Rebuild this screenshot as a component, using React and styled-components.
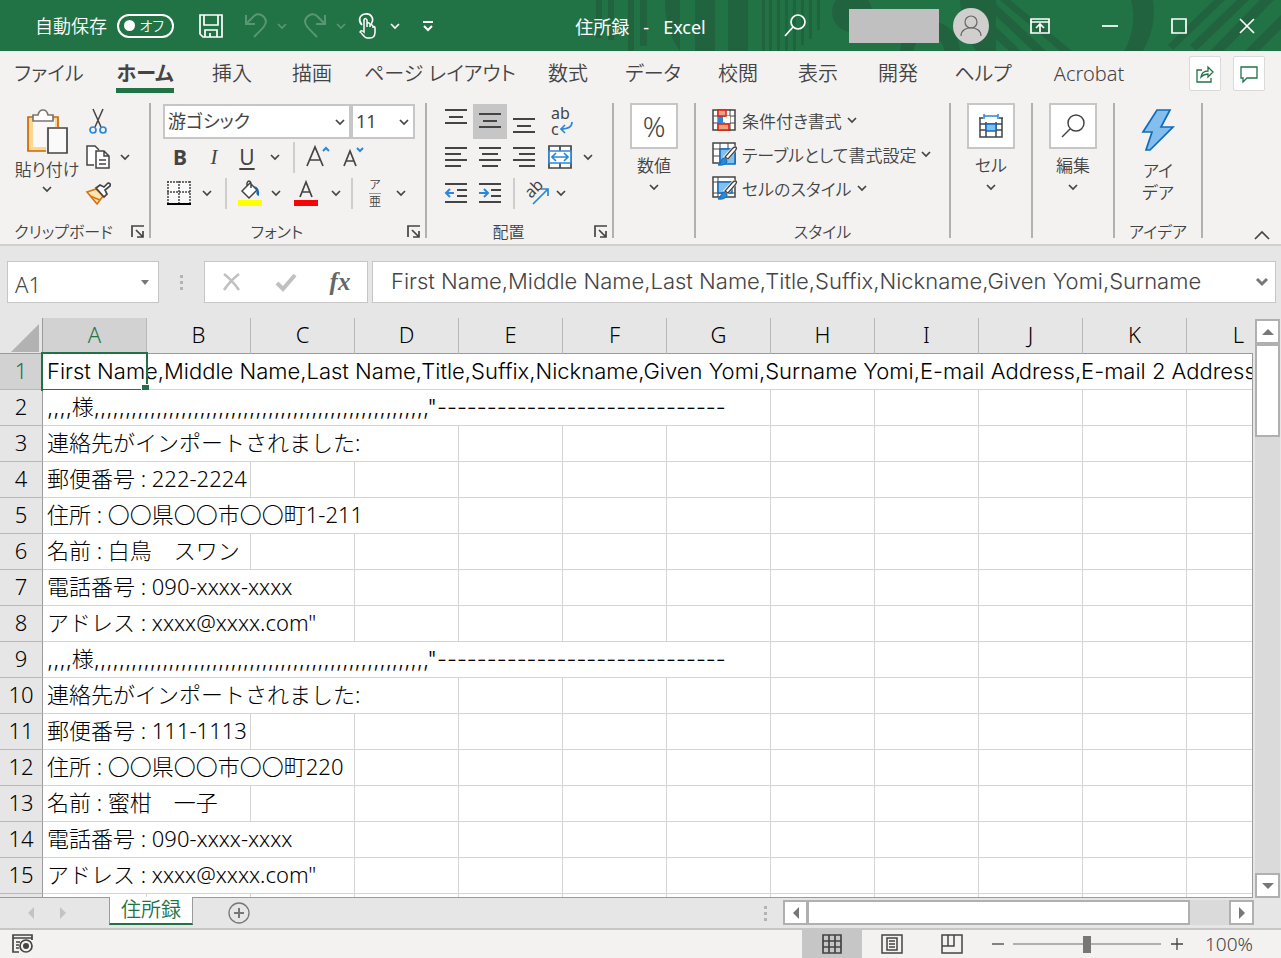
import { useState } from "react";
import styled, { createGlobalStyle, css } from "styled-components";

const HEADER_LINE = "First Name,Middle Name,Last Name,Title,Suffix,Nickname,Given Yomi,Surname";
const COMMAS = ",".repeat(54);
const DASHES = "-".repeat(29);

const columns = ["A", "B", "C", "D", "E", "F", "G", "H", "I", "J", "K", "L"];

// span = number of columns the text runs over
const rows = [
    { text: `${HEADER_LINE} Yomi,E-mail Address,E-mail 2 Address`, span: 12, latin: true },
    { text: `,,,,様${COMMAS}"${DASHES}`, span: 7, latin: true },
    { text: "連絡先がインポートされました:", span: 4 },
    { text: "郵便番号 : 222-2224", span: 2 },
    { text: "住所 : 〇〇県〇〇市〇〇町1-211", span: 4 },
    { text: "名前 : 白鳥　スワン", span: 2 },
    { text: "電話番号 : 090-xxxx-xxxx", span: 3 },
    { text: 'アドレス : xxxx@xxxx.com"', span: 3 },
    { text: `,,,,様${COMMAS}"${DASHES}`, span: 7, latin: true },
    { text: "連絡先がインポートされました:", span: 4 },
    { text: "郵便番号 : 111-1113", span: 2 },
    { text: "住所 : 〇〇県〇〇市〇〇町220", span: 3 },
    { text: "名前 : 蜜柑　一子", span: 2 },
    { text: "電話番号 : 090-xxxx-xxxx", span: 3 },
    { text: 'アドレス : xxxx@xxxx.com"', span: 3 },
    { text: "", span: 1 },
];

const tabs = [
    { name: "ファイル", width: 98 },
    { name: "ホーム", width: 94 },
    { name: "挿入", width: 80 },
    { name: "描画", width: 80 },
    { name: "ページ レイアウト", width: 176 },
    { name: "数式", width: 80 },
    { name: "データ", width: 90 },
    { name: "校閲", width: 80 },
    { name: "表示", width: 80 },
    { name: "開発", width: 80 },
    { name: "ヘルプ", width: 90 },
    { name: "Acrobat", width: 122 },
];

const App = () => {
    return(
        <>
            <GlobalStyle />
            <Window>
                <TitleBar />
                <RibbonTabs />
                <Ribbon />
                <FormulaBar />
                <Sheet />
                <SheetTabs />
                <StatusBar />
            </Window>
        </>
    );
};

const Chevron = () => (
    <Icon width="10" height="8" viewBox="0 0 10 8">
        <path d="M1 2l4 4 4-4" strokeWidth="1.7" />
    </Icon>
);

// Title bar
const TitleBar = () => {
    const [autoSave, setAutoSave] = useState(false);

    return(
        <StyledTitleBar>
            <TitlePattern />
            <QuickAccess>
                <AutoSave>
                    自動保存
                    <input type="checkbox" checked={autoSave} onChange={() => setAutoSave(!autoSave)} />
                    <Toggle>
                        <i />
                        <span>オフ</span>
                    </Toggle>
                </AutoSave>
                <BarButton $width={62} aria-label="保存">
                    <Icon width="26" height="26" viewBox="0 0 26 26">
                        <path d="M2 2h22v22H5l-3-3zM6 2v10h14V2M7 24v-7h12v7M12 20v4" strokeWidth="1.7" />
                    </Icon>
                </BarButton>
                <BarButton $width={28} $dim aria-label="元に戻す">
                    <Icon width="24" height="26" viewBox="0 0 24 26">
                        <path d="M2 2v9h9M2 11l8-8c5-4 11 0 12 5 0 4-2 6-12 16" strokeWidth="2" />
                    </Icon>
                </BarButton>
                <BarButton $width={24} $dim aria-label="元に戻すの一覧"><Chevron /></BarButton>
                <BarButton $width={42} $dim aria-label="やり直し">
                    <Icon width="24" height="26" viewBox="0 0 24 26">
                        <path d="M22 2v9h-9M22 11l-8-8C9-1 3 3 2 8c0 4 2 6 12 16" strokeWidth="2" />
                    </Icon>
                </BarButton>
                <BarButton $width={10} $dim aria-label="やり直しの一覧"><Chevron /></BarButton>
                <BarButton $width={44} aria-label="タッチ/マウス モード">
                    <Icon width="20" height="26" viewBox="0 0 20 26">
                        <path d="M4 12C0 8 1 2 7 1s10 5 6 10" strokeWidth="1.7" />
                        <path d="M6 17V7q1-3 3 0v7V10q2-1 3 1v3-2q2-1 3 1v2-1q2-1 2 1v4c0 4-2 6-5 6H9c-3 0-4-4-7-6 1-2 3-1 4 0z" strokeWidth="1.5" />
                    </Icon>
                </BarButton>
                <BarButton $width={10} aria-label="モードの一覧"><Chevron /></BarButton>
                <BarButton $width={56} aria-label="ツール バーのカスタマイズ">
                    <Icon width="12" height="12" viewBox="0 0 12 12">
                        <path d="M1 2h10M2 6l4 4 4-4" strokeWidth="2" />
                    </Icon>
                </BarButton>
            </QuickAccess>
            <DocTitle>住所録&nbsp;&nbsp; -&nbsp;&nbsp; Excel</DocTitle>
            <WindowTools>
                <BarButton $width={32} aria-label="検索">
                    <Icon width="22" height="24" viewBox="0 0 22 24">
                        <circle cx="14" cy="8" r="7" strokeWidth="1.7" />
                        <path d="M9 13l-8 9" strokeWidth="1.7" />
                    </Icon>
                </BarButton>
                <UserName />
                <Avatar aria-label="アカウント">
                    <Icon width="36" height="36" viewBox="0 0 36 36">
                        <circle cx="18" cy="14" r="6" strokeWidth="1.2" />
                        <path d="M8 28c0-11 20-11 20 0" strokeWidth="1.2" />
                    </Icon>
                </Avatar>
                <BarButton $width={70} aria-label="リボンの表示オプション">
                    <Icon width="22" height="18" viewBox="0 0 22 18">
                        <path d="M2 2h18v14H2zM2 5h18M11 15V8M7 11l4-4 4 4" strokeWidth="1.7" />
                    </Icon>
                </BarButton>
                <BarButton $width={69} aria-label="最小化">
                    <Icon width="16" height="16" viewBox="0 0 16 16"><path d="M0 8h16" strokeWidth="1.7" /></Icon>
                </BarButton>
                <BarButton $width={69} aria-label="最大化">
                    <Icon width="16" height="16" viewBox="0 0 16 16"><path d="M1 1h14v14H1z" strokeWidth="1.7" /></Icon>
                </BarButton>
                <BarButton $width={68} aria-label="閉じる">
                    <Icon width="16" height="16" viewBox="0 0 16 16"><path d="M1 1l14 14M15 1L1 15" strokeWidth="1.7" /></Icon>
                </BarButton>
            </WindowTools>
        </StyledTitleBar>
    );
};

const TitlePattern = () => (
    <PatternSvg viewBox="560 0 721 51" aria-hidden="true">
        <g fill="#22633f">
            <path d="M596 0h6v38h-6zM608 0h6v40h-6zM628 0h6v51h-6zM640 0h7v46h-7z" />
            <path d="M665 0h15v51q-15-20-15-51zM695 0h20v51h-20zM728 0h20v51h-20z" />
            <path d="M762 0h3v51h-3zM769 0h3v51h-3zM777 0h3v51h-3zM785 0h3v51h-3zM793 0h3v51h-3zM801 0h3v45h-3zM809 0h3v39h-3zM817 0h3v30h-3z" />
            <circle cx="852" cy="12" r="20" />
            <path d="M900 51a30 30 0 0 1 60 0h-16a15 15 0 0 0-30 0z" />
            <path d="M960 0h36v51h-20Q962 30 960 0z" />
            <path d="M996 4l50 47h-13L996 16zM996 27l25 24h-12l-13-12zM1010 0l62 51h-12L1000 0z" />
            <path d="M1131 0h22q4 26-10 51h-19q14-25 7-51z" />
            <path d="M1214 0l-46 45 5 5L1225 0zM1237 0l-47 45 6 6 53-51zM1260 0l-50 51h14l50-51zM1281 15l-36 36h14l22-22z" />
        </g>
    </PatternSvg>
);

// Ribbon tabs
const RibbonTabs = () => {
    const [active, setActive] = useState("ホーム");

    return(
        <StyledTabs>
            {tabs.map((tab) => (
                <Tab
                    key={tab.name}
                    $width={tab.width}
                    $active={tab.name === active}
                    onClick={() => setActive(tab.name)}
                >
                    <span>{tab.name}</span>
                </Tab>
            ))}
            <TabActions>
                <ActionButton aria-label="共有">
                    <Icon width="18" height="18" viewBox="0 0 18 18">
                        <path d="M6 5H1v12h14v-4M5 12q1-6 7-6V2l5 5-5 5V9q-4 0-7 3z" strokeWidth="1.3" />
                    </Icon>
                </ActionButton>
                <ActionButton aria-label="コメント">
                    <Icon width="18" height="18" viewBox="0 0 18 18">
                        <path d="M1 2h16v11H7l-4 4v-4H1z" strokeWidth="1.3" />
                    </Icon>
                </ActionButton>
            </TabActions>
        </StyledTabs>
    );
};

// Ribbon
const Lines = ({ d }) => (
    <Icon width="24" height="24" viewBox="0 0 24 24">
        <path d={d} strokeWidth="2" shapeRendering="crispEdges" />
    </Icon>
);

const LauncherIcon = () => (
    <Icon width="14" height="14" viewBox="0 0 14 14">
        <path d="M1 12V1h12M5 5l7 7M12 6v6H6" strokeWidth="1.7" />
    </Icon>
);

const Group = ({ title, width, launcher, children }) => (
    <>
        <StyledGroup $width={width}>
            <GroupBody>{children}</GroupBody>
            <GroupFooter>
                <span>{title}</span>
                {launcher && <Launcher aria-label={`${title}の設定`}><LauncherIcon /></Launcher>}
            </GroupFooter>
        </StyledGroup>
        <Divider />
    </>
);

const More = ({ width, label }) => (
    <ToolButton $width={width} aria-label={label}><Chevron /></ToolButton>
);

const PaintedGrid = ({ full }) => (
    <Icon width="25" height="25" viewBox="0 0 25 25">
        <path d="M1 1h22v20H1z" fill="#fff" strokeWidth="1.5" />
        <path d={full ? "M1 6h22M6 1v20M1 17h22" : "M1 7h22M1 14h22M8 1v20M16 1v20"} />
        <path d={full ? "M6 6h14v11H6z" : "M8 7h15v15H8z"} fill="#83beec" stroke="#0f6cbd" strokeWidth="1.5" />
        <path d="M24 5L13 17" stroke="#f3f2f1" strokeWidth="6" />
        <path d="M23 5q3 0 0 4l-7 8-3-2 7-8q2-2 3-2z" fill="#fff" strokeWidth="1.3" />
        <path d="M12 16q4 1 3 4-3 4-9 3 3-1 3-4 1-3 3-3z" fill="#2b88d8" stroke="#0f6cbd" />
    </Icon>
);

const Ribbon = () => {
    return(
        <StyledRibbon>
            <Group title="クリップボード" width={149} launcher>
                <Clipboard>
                    <PasteButton>
                        <Icon width="44" height="46" viewBox="0 0 44 46">
                            <path d="M3 8h30v34H3z" fill="#fdd792" stroke="#c8690a" strokeWidth="1.7" />
                            <path d="M8 11h22v27H8z" fill="#faf9f8" stroke="none" />
                            <path d="M8 12V6h5q1-5 5-5t5 5h5v6z" fill="#fff" stroke="#797673" strokeWidth="1.7" />
                            <path d="M21 18h23v28H21z" fill="#f3f2f1" stroke="none" />
                            <path d="M23 19h19v25H23z" fill="#fafafa" strokeWidth="1.7" />
                        </Icon>
                        <span>貼り付け</span>
                        <Chevron />
                    </PasteButton>
                    <div>
                        <ToolRow>
                            <ToolButton $width={30} aria-label="切り取り">
                                <Icon width="18" height="26" viewBox="0 0 18 26">
                                    <path d="M4 1l8 18M14 1L6 19" strokeWidth="1.5" />
                                    <circle cx="4" cy="22" r="3" stroke="#2b88d8" strokeWidth="1.7" />
                                    <circle cx="14" cy="22" r="3" stroke="#2b88d8" strokeWidth="1.7" />
                                </Icon>
                            </ToolButton>
                        </ToolRow>
                        <ToolRow>
                            <ToolButton $width={30} aria-label="コピー">
                                <Icon width="26" height="26" viewBox="0 0 26 26">
                                    <path d="M9 21H2V2h8l4 4" fill="#fff" strokeWidth="1.5" />
                                    <path d="M11 7h8l5 5v12H11zM19 7v5h5M14 16h7M14 20h7" fill="#fff" strokeWidth="1.5" />
                                </Icon>
                            </ToolButton>
                            <More width={24} label="コピーの一覧" />
                        </ToolRow>
                        <ToolRow>
                            <ToolButton $width={30} aria-label="書式のコピー/貼り付け">
                                <Icon width="26" height="24" viewBox="0 0 26 24">
                                    <path d="M2 11l9-3 7 7-6 8z" fill="#ffe5b4" stroke="#d8730e" strokeWidth="1.7" />
                                    <path d="M5 15l10 4" stroke="#d8730e" strokeWidth="1.7" />
                                    <path d="M11 7l4-3 4 2 4-4q3 0 2 3l-5 4 2 4-3 3z" fill="#fff" strokeWidth="1.7" />
                                </Icon>
                            </ToolButton>
                        </ToolRow>
                    </div>
                </Clipboard>
            </Group>

            <Group title="フォント" width={274} launcher>
                <ToolRows>
                    <ToolRow>
                        <SelectBox $width={188}>
                            <select aria-label="フォント名"><option>游ゴシック</option></select>
                            <Chevron />
                        </SelectBox>
                        <SelectBox $width={64}>
                            <select aria-label="フォント サイズ"><option>11</option></select>
                            <Chevron />
                        </SelectBox>
                    </ToolRow>
                    <ToolRow>
                        <LetterButton $width={34} $bold>B</LetterButton>
                        <LetterButton $width={34} $italic>I</LetterButton>
                        <LetterButton $width={32} $underline>U</LetterButton>
                        <More width={24} label="下線の一覧" />
                        <Separator />
                        <ToolButton $width={34} aria-label="フォント サイズの拡大">
                            <Icon width="26" height="24" viewBox="0 0 26 24">
                                <path d="M2 21L10 2l8 19M5 15h10" strokeWidth="1.7" />
                                <path d="M18 6l3-3 3 3" stroke="#2b88d8" strokeWidth="2" />
                            </Icon>
                        </ToolButton>
                        <ToolButton $width={36} aria-label="フォント サイズの縮小">
                            <Icon width="24" height="24" viewBox="0 0 24 24">
                                <path d="M3 21l6-15 6 15M5 16h8" strokeWidth="1.7" />
                                <path d="M16 3l3 3 3-3" stroke="#2b88d8" strokeWidth="2" />
                            </Icon>
                        </ToolButton>
                    </ToolRow>
                    <ToolRow>
                        <ToolButton $width={32} aria-label="罫線">
                            <Icon width="24" height="24" viewBox="0 0 24 24">
                                <path d="M1 1h22v20H1z" fill="#fafafa" stroke="none" />
                                <path d="M0 1h24M0 11h24M1 0v22M12 0v22M23 0v22" strokeWidth="1.5" strokeDasharray="2 1" />
                                <path d="M0 23h24" stroke="#000" strokeWidth="2" />
                            </Icon>
                        </ToolButton>
                        <More width={24} label="罫線の一覧" />
                        <Separator />
                        <ToolButton $width={34} aria-label="塗りつぶしの色">
                            <Icon width="26" height="26" viewBox="0 0 26 26">
                                <path d="M5 11l8-8 7 7-8 8zM10 6V3q2-4 4 0v5" fill="#fff" strokeWidth="1.5" />
                                <path d="M17 6q6 1 5 10-4-1-2-6z" fill="#0f6cbd" stroke="none" />
                                <path d="M1 20h24v6H1z" fill="#ff0" stroke="none" />
                            </Icon>
                        </ToolButton>
                        <More width={18} label="塗りつぶしの色の一覧" />
                        <ToolButton $width={42} aria-label="フォントの色">
                            <Icon width="26" height="26" viewBox="0 0 26 26">
                                <path d="M7 17l6-15 6 15M9 12h8" strokeWidth="1.7" />
                                <path d="M1 20h24v6H1z" fill="#f50505" stroke="none" />
                            </Icon>
                        </ToolButton>
                        <More width={18} label="フォントの色の一覧" />
                        <Separator />
                        <RubyButton aria-label="ふりがなの表示">
                            <span>ア</span>
                            <span>亜</span>
                        </RubyButton>
                        <More width={20} label="ふりがなの一覧" />
                    </ToolRow>
                </ToolRows>
            </Group>

            <Group title="配置" width={185} launcher>
                <ToolRows>
                    <ToolRow>
                        <ToolButton $width={34} aria-label="上揃え"><Lines d="M1 1h22M5 8h14M1 14h22" /></ToolButton>
                        <ToolButton $width={34} $pressed aria-label="上下中央揃え"><Lines d="M1 5h22M5 12h14M1 18h22" /></ToolButton>
                        <ToolButton $width={34} aria-label="下揃え"><Lines d="M1 10h22M5 17h14M1 23h22" /></ToolButton>
                        <WrapButton aria-label="折り返して全体を表示する">
                            <span>ab</span>
                            <span>
                                c
                                <Icon width="14" height="14" viewBox="0 0 14 14">
                                    <path d="M13 1q0 7-11 7M6 4L2 8l4 4" stroke="#2b88d8" strokeWidth="1.7" />
                                </Icon>
                            </span>
                        </WrapButton>
                    </ToolRow>
                    <ToolRow>
                        <ToolButton $width={34} aria-label="左揃え"><Lines d="M1 3h22M1 9h16M1 15h22M1 21h16" /></ToolButton>
                        <ToolButton $width={34} aria-label="中央揃え"><Lines d="M1 3h22M4 9h16M1 15h22M4 21h16" /></ToolButton>
                        <ToolButton $width={34} aria-label="右揃え"><Lines d="M1 3h22M7 9h16M1 15h22M7 21h16" /></ToolButton>
                        <ToolButton $width={38} aria-label="セルを結合して中央揃え">
                            <Icon width="24" height="24" viewBox="0 0 24 24">
                                <path d="M1 1h22v22H1zM12 1v22" fill="#fff" strokeWidth="1.7" />
                                <path d="M1 6h22v12H1z" fill="#fff" stroke="#2b88d8" strokeWidth="1.7" />
                                <path d="M4 12h16M8 8l-4 4 4 4M16 8l4 4-4 4" stroke="#2b88d8" strokeWidth="1.7" />
                            </Icon>
                        </ToolButton>
                        <More width={18} label="結合の一覧" />
                    </ToolRow>
                    <ToolRow>
                        <ToolButton $width={34} aria-label="インデントを減らす">
                            <Icon width="24" height="24" viewBox="0 0 24 24">
                                <path d="M1 3h22M13 9h10M13 15h10M1 21h22" strokeWidth="2" shapeRendering="crispEdges" />
                                <path d="M10 12H2M6 8l-4 4 4 4" stroke="#2b88d8" strokeWidth="2" />
                            </Icon>
                        </ToolButton>
                        <ToolButton $width={34} aria-label="インデントを増やす">
                            <Icon width="24" height="24" viewBox="0 0 24 24">
                                <path d="M1 3h22M13 9h10M13 15h10M1 21h22" strokeWidth="2" shapeRendering="crispEdges" />
                                <path d="M1 12h8M6 8l4 4-4 4" stroke="#2b88d8" strokeWidth="2" />
                            </Icon>
                        </ToolButton>
                        <Separator />
                        <ToolButton $width={32} aria-label="方向">
                            <Icon width="28" height="28" viewBox="0 0 28 28">
                                <text transform="translate(8 20) rotate(-45)" fill="#444" stroke="none" fontSize="16" fontWeight="400">ab</text>
                                <path d="M10 25L25 10M18 10h7v7" stroke="#2b88d8" strokeWidth="1.7" />
                            </Icon>
                        </ToolButton>
                        <More width={16} label="方向の一覧" />
                    </ToolRow>
                </ToolRows>
            </Group>

            <Group title="" width={80}>
                <BigButton>
                    <IconBox>%</IconBox>
                    <span>数値</span>
                    <Chevron />
                </BigButton>
            </Group>

            <Group title="スタイル" width={253}>
                <StyleList>
                    <StyleButton>
                        <Icon width="25" height="25" viewBox="0 0 25 25">
                            <path d="M1 2h22v20H1z" fill="#fff" strokeWidth="1.5" />
                            <path d="M1 8h22M1 15h22M6 1v22M18 1v22" />
                            <path d="M13 8h5v7h-5z" fill="#fff" stroke="none" />
                            <path d="M6 8h5v7H6z" fill="#2b88d8" stroke="none" />
                            <path d="M6 2h8v6H6zM6 16h11v6H6z" fill="#e3a684" stroke="#e81c0c" strokeWidth="1.5" />
                        </Icon>
                        <span>条件付き書式</span>
                        <Chevron />
                    </StyleButton>
                    <StyleButton>
                        <PaintedGrid />
                        <span>テーブルとして書式設定</span>
                        <Chevron />
                    </StyleButton>
                    <StyleButton>
                        <PaintedGrid full />
                        <span>セルのスタイル</span>
                        <Chevron />
                    </StyleButton>
                </StyleList>
            </Group>

            <Group title="" width={80}>
                <BigButton>
                    <IconBox>
                        <Icon width="26" height="26" viewBox="0 0 26 26">
                            <path d="M2 5v19h22V5M2 11h22M2 17h22M8 9v15M18 9v15M1 5h4M21 5h4" strokeWidth="1.5" />
                            <path d="M8 11h10v7H8z" fill="#83beec" stroke="#0f6cbd" strokeWidth="1.5" />
                            <path d="M6 3h14M6 1v5M20 1v5" stroke="#2b88d8" strokeWidth="1.5" />
                        </Icon>
                    </IconBox>
                    <span>セル</span>
                    <Chevron />
                </BigButton>
            </Group>

            <Group title="" width={80}>
                <BigButton>
                    <IconBox>
                        <Icon width="26" height="26" viewBox="0 0 26 26">
                            <circle cx="16" cy="10" r="8" strokeWidth="1.5" />
                            <path d="M10 16l-8 8" strokeWidth="1.5" />
                        </Icon>
                    </IconBox>
                    <span>編集</span>
                    <Chevron />
                </BigButton>
            </Group>

            <Group title="アイデア" width={86}>
                <BigButton $tall>
                    <Icon width="34" height="44" viewBox="0 0 34 44">
                        <path d="M16 2h13l-9 17h12L9 42H5l6-18H2z" fill="#83beec" stroke="#0f6cbd" strokeWidth="1.7" />
                    </Icon>
                    <span>アイ<br />デア</span>
                </BigButton>
            </Group>

            <CollapseButton aria-label="リボンを折りたたむ">
                <Icon width="16" height="10" viewBox="0 0 16 10"><path d="M1 9l7-7 7 7" strokeWidth="1.7" /></Icon>
            </CollapseButton>
        </StyledRibbon>
    );
};

// Formula bar
const FormulaBar = () => {
    const [formula, setFormula] = useState(HEADER_LINE);

    return(
        <StyledFormulaBar>
            <NameBox>
                <input aria-label="名前ボックス" defaultValue="A1" />
                <button aria-label="名前の一覧">
                    <Icon width="8" height="5" viewBox="0 0 8 5"><path d="M0 0h8L4 5z" fill="#777" stroke="none" /></Icon>
                </button>
            </NameBox>
            <Grip><i /><i /><i /></Grip>
            <FormulaTools>
                <button aria-label="キャンセル">
                    <Icon width="18" height="18" viewBox="0 0 18 18">
                        <path d="M1 1q8 6 15 16M16 1Q7 8 1 17" stroke="#c0c0c0" strokeWidth="2.5" />
                    </Icon>
                </button>
                <button aria-label="入力">
                    <Icon width="20" height="18" viewBox="0 0 20 18">
                        <path d="M1 10l6 6L19 2" stroke="#c0c0c0" strokeWidth="4" />
                    </Icon>
                </button>
                <button aria-label="関数の挿入"><em>fx</em></button>
            </FormulaTools>
            <FormulaInput>
                <input aria-label="数式バー" value={formula} onChange={(e) => setFormula(e.target.value)} />
                <button aria-label="数式バーの展開">
                    <Icon width="12" height="10" viewBox="0 0 12 10"><path d="M1 2l5 5 5-5" stroke="#777" strokeWidth="3" /></Icon>
                </button>
            </FormulaInput>
        </StyledFormulaBar>
    );
};

// Worksheet
const Arrow = ({ d, color = "#777" }) => (
    <Icon width="12" height="12" viewBox="0 0 12 12">
        <path d={d} fill={color} stroke="none" />
    </Icon>
);

const Sheet = () => {
    return(
        <StyledSheet>
            <Viewport>
                <Table>
                    <colgroup>
                        <col className="numbers" />
                        {columns.map((column) => <col key={column} />)}
                    </colgroup>
                    <thead>
                        <tr>
                            <Corner>
                                <Icon width="28" height="28" viewBox="0 0 28 28"><path d="M28 0v28H0z" fill="#b2b2b2" stroke="none" /></Icon>
                            </Corner>
                            {columns.map((column, i) => (
                                <ColumnHead key={column} $selected={i === 0}>{column}</ColumnHead>
                            ))}
                        </tr>
                    </thead>
                    <tbody>
                        {rows.map((row, i) => (
                            <tr key={i}>
                                <RowHead $selected={i === 0}>{i < 15 ? i + 1 : ""}</RowHead>
                                <Cell colSpan={row.span} $latin={row.latin}>
                                    {row.text}
                                    {i === 0 && <Selection />}
                                </Cell>
                                {columns.slice(row.span).map((column) => <Cell key={column} />)}
                            </tr>
                        ))}
                    </tbody>
                </Table>
            </Viewport>
            <VerticalScroll>
                <ScrollButton aria-label="上へ"><Arrow d="M0 9l6-6 6 6z" /></ScrollButton>
                <VerticalThumb />
                <ScrollButton aria-label="下へ"><Arrow d="M0 3l6 6 6-6z" /></ScrollButton>
            </VerticalScroll>
        </StyledSheet>
    );
};

const SheetTabs = () => {
    return(
        <StyledSheetTabs>
            <NavButtons>
                <button aria-label="前のシート"><Arrow d="M9 0v12L3 6z" color="#c3c3c3" /></button>
                <button aria-label="次のシート"><Arrow d="M3 0v12l6-6z" color="#c3c3c3" /></button>
            </NavButtons>
            <SheetTab>住所録</SheetTab>
            <AddSheet aria-label="新しいシート">
                <Icon width="24" height="24" viewBox="0 0 24 24">
                    <circle cx="12" cy="12" r="10" stroke="#777" strokeWidth="1.3" />
                    <path d="M12 7v10M7 12h10" stroke="#777" strokeWidth="2" />
                </Icon>
            </AddSheet>
            <Grip $end><i /><i /><i /></Grip>
            <HorizontalScroll>
                <ScrollButton aria-label="左へ"><Arrow d="M9 0v12L3 6z" /></ScrollButton>
                <HorizontalThumb />
                <ScrollButton aria-label="右へ"><Arrow d="M3 0v12l6-6z" /></ScrollButton>
            </HorizontalScroll>
        </StyledSheetTabs>
    );
};

// Status bar
const StatusBar = () => {
    const [zoom, setZoom] = useState(100);

    return(
        <StyledStatusBar>
            <MacroButton aria-label="マクロの記録">
                <Icon width="24" height="22" viewBox="0 0 24 22">
                    <path d="M8 19H2V2h19v5M2 5h19M5 9h4M5 12h3M5 15h3" strokeWidth="1.7" />
                    <circle cx="15" cy="13" r="6" fill="#f3f2f1" strokeWidth="1.7" />
                    <circle cx="15" cy="13" r="3" fill="#444" stroke="none" />
                </Icon>
            </MacroButton>
            <ViewButton $pressed aria-label="標準">
                <Icon width="20" height="20" viewBox="0 0 20 20">
                    <path d="M1 1h18v18H1zM1 7h18M1 13h18M7 1v18M13 1v18" strokeWidth="1.7" />
                </Icon>
            </ViewButton>
            <ViewButton aria-label="ページ レイアウト">
                <Icon width="22" height="20" viewBox="0 0 22 20">
                    <path d="M1 1h20v18H1zM6 4h10v12H6zM8 7h6M8 10h6M8 13h6" strokeWidth="1.5" />
                </Icon>
            </ViewButton>
            <ViewButton aria-label="改ページ プレビュー">
                <Icon width="22" height="20" viewBox="0 0 22 20">
                    <path d="M1 1h20v18H1zM1 12h12V1M7 1v11" strokeWidth="1.5" />
                </Icon>
            </ViewButton>
            <ZoomButton aria-label="縮小" onClick={() => setZoom(zoom - 10)}>
                <Icon width="12" height="12" viewBox="0 0 12 12"><path d="M0 6h12" strokeWidth="1.3" /></Icon>
            </ZoomButton>
            <ZoomSlider type="range" min="0" max="200" value={zoom} aria-label="ズーム" onChange={(e) => setZoom(Number(e.target.value))} />
            <ZoomButton aria-label="拡大" onClick={() => setZoom(zoom + 10)}>
                <Icon width="12" height="12" viewBox="0 0 12 12"><path d="M0 6h12M6 0v12" strokeWidth="1.3" /></Icon>
            </ZoomButton>
            <ZoomValue>{zoom}%</ZoomValue>
        </StyledStatusBar>
    );
};

const GlobalStyle = createGlobalStyle`
    * {
        box-sizing: border-box;
    }
    body {
        margin: 0;
        color: #444;
        font-family: "Noto Sans", "Noto Sans CJK JP", sans-serif;
        font-size: 17px;
        font-weight: 350;
        font-feature-settings: "palt";
    }
    button, input, select {
        margin: 0;
        padding: 0;
        border: 0;
        background: none;
        color: inherit;
        font: inherit;
        font-feature-settings: inherit;
    }
`;

const latinFont = 'Inter, "Noto Sans CJK JP", sans-serif';

const cellFont = css`
    font-family: "Noto Sans", "Noto Sans CJK JP", sans-serif;
    font-size: 22px;
    font-weight: 300;
    font-feature-settings: normal;
`;

const Window = styled.div`
    display: flex;
    flex-direction: column;
    height: 100vh;
    overflow: hidden;
    background: #e6e6e6;
`;

const Icon = styled.svg`
    flex: none;
    display: block;
    overflow: visible;
    fill: none;
    stroke: currentColor;
`;

const StyledTitleBar = styled.header`
    position: relative;
    display: grid;
    grid-template-columns: 1fr auto 1fr;
    align-items: center;
    height: 51px;
    flex: none;
    background: #217346;
    color: white;
    font-size: 18px;
`;

const PatternSvg = styled.svg`
    position: absolute;
    top: 0;
    right: 0;
    height: 51px;
`;

const QuickAccess = styled.div`
    display: flex;
    align-items: center;
    padding-left: 35px;
`;

const AutoSave = styled.label`
    display: flex;
    align-items: center;
    gap: 10px;
    line-height: 24px;
    input {
        position: absolute;
        opacity: 0;
    }
`;

const Toggle = styled.span`
    display: flex;
    align-items: center;
    justify-content: space-between;
    width: 57px;
    height: 24px;
    padding: 0 8px 0 5px;
    border: 2px solid white;
    border-radius: 12px;
    font-size: 14px;
    line-height: 20px;
    i {
        width: 11px;
        height: 11px;
        border-radius: 50%;
        background: white;
    }
`;

const BarButton = styled.button`
    position: relative;
    display: flex;
    flex: none;
    align-items: center;
    justify-content: center;
    width: ${(props) => props.$width}px;
    height: 50px;
    opacity: ${(props) => (props.$dim ? 0.25 : 1)};
    &:first-of-type {
        margin-left: 6px;
    }
`;

const DocTitle = styled.h1`
    position: relative;
    margin: 0;
    font-size: 18px;
    font-weight: 400;
    white-space: nowrap;
`;

const WindowTools = styled.div`
    display: flex;
    align-items: center;
    justify-content: flex-end;
`;

const UserName = styled.div`
    position: relative;
    width: 90px;
    height: 34px;
    margin: 0 14px 0 38px;
    background: #c0c0c0;
`;

const Avatar = styled.button`
    position: relative;
    width: 36px;
    height: 36px;
    margin-right: 16px;
    border-radius: 50%;
    background: #d0cfce;
    color: #666;
`;

const StyledTabs = styled.nav`
    display: flex;
    flex: none;
    height: 45px;
    background: #f3f2f1;
`;

const Tab = styled.button`
    display: flex;
    flex: 0 1 ${(props) => props.$width}px;
    justify-content: center;
    padding-top: 8px;
    font-size: 20px;
    font-weight: ${(props) => (props.$active ? 700 : "inherit")};
    white-space: nowrap;
    span {
        height: 34px;
        line-height: 29px;
        border-bottom: 5px solid ${(props) => (props.$active ? "#217346" : "transparent")};
    }
`;

const TabActions = styled.div`
    display: flex;
    gap: 12px;
    margin-left: auto;
    padding: 5px 16px 0 0;
`;

const ActionButton = styled.button`
    display: flex;
    align-items: center;
    justify-content: center;
    width: 32px;
    height: 35px;
    border: 1px solid #dcdad8;
    border-radius: 2px;
    background: white;
    color: #217346;
`;

const StyledRibbon = styled.section`
    display: flex;
    flex: none;
    height: 150px;
    padding-top: 7px;
    border-bottom: 2px solid #d2d0ce;
    background: #f3f2f1;
`;

const StyledGroup = styled.div`
    display: flex;
    flex-direction: column;
    flex: 0 1 ${(props) => props.$width}px;
    height: 140px;
`;

const GroupBody = styled.div`
    flex: 1;
`;

const GroupFooter = styled.div`
    display: flex;
    align-items: center;
    font-size: 16px;
    line-height: 22px;
    span {
        flex: 1;
        text-align: center;
    }
`;

const Launcher = styled.button`
    display: flex;
    justify-content: center;
    width: 22px;
`;

const Divider = styled.div`
    flex: none;
    width: 2px;
    height: 135px;
    background: #b3b1af;
`;

const Separator = styled.div`
    flex: none;
    width: 2px;
    height: 31px;
    margin: 0 6px;
    background: #d0cecd;
`;

const Clipboard = styled.div`
    display: flex;
    padding-left: 11px;
`;

const PasteButton = styled.button`
    display: flex;
    flex-direction: column;
    align-items: center;
    width: 72px;
    padding-top: 6px;
    span {
        line-height: 30px;
    }
`;

const ToolRows = styled.div`
    padding-left: 12px;
`;

const ToolRow = styled.div`
    display: flex;
    align-items: center;
    height: 36px;
`;

const ToolButton = styled.button`
    display: flex;
    flex: none;
    align-items: center;
    justify-content: center;
    width: ${(props) => props.$width}px;
    height: 35px;
    background: ${(props) => (props.$pressed ? "#c6c6c6" : "none")};
`;

const LetterButton = styled(ToolButton)`
    font-family: ${(props) => (props.$italic ? '"Liberation Serif", serif' : "inherit")};
    font-size: 21px;
    font-style: ${(props) => (props.$italic ? "italic" : "normal")};
    font-weight: ${(props) => (props.$bold ? 700 : 400)};
    text-decoration: ${(props) => (props.$underline ? "underline" : "none")};
    text-underline-offset: 3px;
`;

const RubyButton = styled(ToolButton)`
    flex-direction: column;
    width: 32px;
    font-size: 12px;
    line-height: 16px;
    span + span {
        border-top: 1px solid #999;
    }
`;

const WrapButton = styled(ToolButton)`
    flex-direction: column;
    width: 42px;
    font-size: 16px;
    font-weight: 400;
    line-height: 16px;
    span {
        display: flex;
        width: 22px;
    }
`;

const SelectBox = styled.div`
    position: relative;
    width: ${(props) => props.$width}px;
    height: 35px;
    border: 2px solid #c6c6c6;
    background: white;
    select {
        appearance: none;
        width: 100%;
        height: 100%;
        padding-left: 3px;
        font-size: 18px;
        font-weight: 400;
    }
    svg {
        position: absolute;
        top: 12px;
        right: 4px;
        pointer-events: none;
    }
`;

const BigButton = styled.button`
    display: flex;
    flex-direction: column;
    align-items: center;
    width: 100%;
    padding-top: ${(props) => (props.$tall ? 5 : 0)}px;
    > span {
        line-height: ${(props) => (props.$tall ? 22 : 34)}px;
        padding-top: ${(props) => (props.$tall ? 8 : 0)}px;
    }
`;

const IconBox = styled.div`
    display: flex;
    align-items: center;
    justify-content: center;
    width: 48px;
    height: 46px;
    border: 2px solid #c6c6c6;
    background: white;
    font-size: 28px;
`;

const StyleList = styled.div`
    padding-left: 16px;
`;

const StyleButton = styled.button`
    display: flex;
    align-items: center;
    gap: 5px;
    height: 34px;
    white-space: nowrap;
`;

const CollapseButton = styled.button`
    align-self: flex-end;
    margin: 0 11px 4px auto;
`;

const StyledFormulaBar = styled.section`
    display: flex;
    flex: none;
    height: 72px;
    padding: 15px 5px 15px 7px;
    button {
        display: flex;
        align-items: center;
        justify-content: center;
    }
`;

const boxed = css`
    display: flex;
    border: 1px solid #c6c6c6;
    background: white;
`;

const NameBox = styled.div`
    ${boxed}
    width: 152px;
    input {
        ${cellFont}
        flex: 1;
        min-width: 0;
        padding: 4px 0 0 7px;
    }
    button {
        width: 26px;
    }
`;

const Grip = styled.div`
    display: flex;
    flex-direction: column;
    align-items: center;
    justify-content: center;
    gap: 3px;
    width: ${(props) => (props.$end ? 36 : 45)}px;
    margin-left: ${(props) => (props.$end ? "auto" : 0)};
    i {
        width: 3px;
        height: 3px;
        background: #b4b4b4;
    }
`;

const FormulaTools = styled.div`
    ${boxed}
    width: 164px;
    margin-right: 4px;
    button {
        flex: 1;
    }
    em {
        font-family: "Liberation Serif", serif;
        font-size: 25px;
        font-weight: 700;
        color: #666;
    }
`;

const FormulaInput = styled.div`
    ${boxed}
    flex: 1;
    input {
        ${cellFont}
        flex: 1;
        min-width: 0;
        padding: 0 0 2px 18px;
        font-family: ${latinFont};
    }
    button {
        width: 26px;
    }
`;

const StyledSheet = styled.main`
    display: flex;
    flex: 1;
    min-height: 0;
`;

const Viewport = styled.div`
    position: relative;
    flex: 1;
    min-width: 0;
    overflow: hidden;
    border-bottom: 1px solid #9b9b9b;
    &::after {
        content: "";
        position: absolute;
        top: 35px;
        right: 0;
        bottom: 0;
        width: 1px;
        background: #9b9b9b;
    }
`;

const Table = styled.table`
    ${cellFont}
    width: 1291px;
    table-layout: fixed;
    border-collapse: separate;
    border-spacing: 0;
    color: black;
    line-height: 30px;
    .numbers {
        width: 43px;
    }
    th, td {
        height: 36px;
        padding: 0 0 4px;
        font-weight: 300;
        white-space: nowrap;
    }
`;

const Corner = styled.th`
    border-bottom: 1px solid #9b9b9b;
    border-right: 1px solid #9b9b9b;
    svg {
        margin: 4px 0 0 11px;
    }
    && {
        padding: 0;
    }
`;

const ColumnHead = styled.th`
    border-right: 1px solid #b8b8b8;
    border-bottom: 1px solid #9b9b9b;
    background: ${(props) => (props.$selected ? "#d2d2d2" : "#e6e6e6")};
    color: ${(props) => (props.$selected ? "#217346" : "black")};
`;

const RowHead = styled.th`
    border-right: 1px solid #9b9b9b;
    border-bottom: 1px solid #b8b8b8;
    background: ${(props) => (props.$selected ? "#d2d2d2" : "#e6e6e6")};
    color: ${(props) => (props.$selected ? "#217346" : "black")};
`;

const Cell = styled.td`
    position: relative;
    border-right: 1px solid #d4d4d4;
    border-bottom: 1px solid #d4d4d4;
    background: white;
    font-family: ${(props) => (props.$latin ? latinFont : "inherit")};
    && {
        padding-left: 4px;
        padding-bottom: ${(props) => (props.$latin ? 2 : 4)}px;
    }
`;

const Selection = styled.div`
    position: absolute;
    top: -2px;
    left: -2px;
    width: 107px;
    height: 39px;
    border: 2px solid #217346;
    &::after {
        content: "";
        position: absolute;
        right: -3px;
        bottom: -3px;
        width: 7px;
        height: 7px;
        border: 1px solid white;
        border-width: 1px 0 0 1px;
        background: #217346;
    }
`;

const VerticalScroll = styled.div`
    display: flex;
    flex-direction: column;
    width: 25px;
    margin: 1px 1px 0 2px;
    background: #dadada;
`;

const ScrollButton = styled.button`
    display: flex;
    flex: none;
    align-items: center;
    justify-content: center;
    width: 25px;
    height: 25px;
    border: 2px solid #b0b0b0;
    background: white;
`;

const VerticalThumb = styled.div`
    height: 93px;
    margin-bottom: auto;
    border: 2px solid #b0b0b0;
    background: white;
`;

const StyledSheetTabs = styled.section`
    display: flex;
    flex: none;
    height: 32px;
    border-bottom: 2px solid #c6c6c6;
`;

const NavButtons = styled.div`
    display: flex;
    align-items: center;
    gap: 20px;
    width: 109px;
    padding-left: 25px;
`;

const SheetTab = styled.button`
    position: relative;
    width: 84px;
    height: 28px;
    margin-top: -1px;
    border: 1px solid #9b9b9b;
    border-top: 0;
    border-bottom: 2px solid #217346;
    background: white;
    color: #217346;
    font-size: 20px;
    line-height: 24px;
`;

const AddSheet = styled.button`
    margin-left: 34px;
`;

const HorizontalScroll = styled.div`
    display: flex;
    width: 471px;
    height: 25px;
    margin: 2px 27px 0 0;
    background: #dadada;
`;

const HorizontalThumb = styled.div`
    flex: 0 1 382px;
    margin-right: auto;
    border: 2px solid #b0b0b0;
    border-left-width: 1px;
    background: white;
`;

const StyledStatusBar = styled.footer`
    display: flex;
    flex: none;
    align-items: center;
    height: 28px;
    padding-right: 28px;
    background: #f3f2f1;
`;

const MacroButton = styled.button`
    margin: 0 auto 0 11px;
`;

const ViewButton = styled.button`
    display: flex;
    align-items: center;
    justify-content: center;
    width: 60px;
    height: 28px;
    background: ${(props) => (props.$pressed ? "#c6c6c6" : "none")};
`;

const ZoomButton = styled.button`
    display: flex;
    align-items: center;
    justify-content: center;
    width: 31px;
    height: 28px;
`;

const ZoomSlider = styled.input`
    appearance: none;
    width: 148px;
    height: 2px;
    background: #b0b0b0;
    &::-webkit-slider-thumb {
        appearance: none;
        width: 8px;
        height: 17px;
        background: #777;
    }
`;

const ZoomValue = styled.output`
    width: 61px;
    font-size: 19px;
    text-align: right;
`;

export default App;
